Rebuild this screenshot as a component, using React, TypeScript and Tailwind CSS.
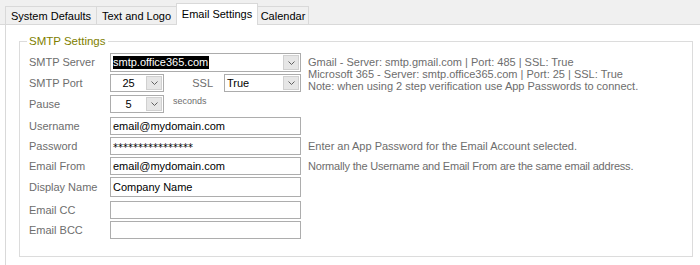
import React from "react";

const Chevron = () => (
  <svg width="7" height="4" viewBox="0 0 7 4">
    <path d="M0.5 0.5 L3.5 3.5 L6.5 0.5" fill="none" stroke="#606060" strokeWidth="1" />
  </svg>
);

function Combo({ className, children, center }: { className: string; children: React.ReactNode; center?: boolean }) {
  return (
    <div className={`flex border border-[#acacac] bg-white ${className}`}>
      <div className={`flex flex-1 items-center overflow-hidden text-black ${center ? "justify-center" : "pl-[2px]"}`}>{children}</div>
      <div className="my-px mr-px flex w-[16px] items-center justify-center border border-[#d0d0d0] bg-[#e6e6e6]">
        <Chevron />
      </div>
    </div>
  );
}

function TextBox({ className, children }: { className: string; children?: React.ReactNode }) {
  return (
    <div className={`flex w-[191px] items-center border border-[#adadad] bg-white pl-[2px] text-black ${className}`}>
      {children}
    </div>
  );
}

function Label({ children }: { children: React.ReactNode }) {
  return <div className="w-[81px] shrink-0 text-[#6d6d6d]">{children}</div>;
}

export default function App() {
  return (
    <div className="h-[265px] w-[700px] overflow-hidden bg-white text-[11px] leading-[13px] font-['Liberation_Sans',Tahoma,sans-serif]">
      {/* Tab strip */}
      <div className="flex h-[25px] items-end border-b border-[#d9d9d9] bg-[#f0f0f0] pl-[5px] text-[11px] leading-[14px] text-black">
        <div className="flex h-[18px] w-[92px] items-center justify-center border border-b-0 border-[#d9d9d9] bg-[#f0f0f0]">
          System Defaults
        </div>
        <div className="-ml-px flex h-[18px] w-[81px] items-center justify-center border border-b-0 border-[#d9d9d9] bg-[#f0f0f0]">
          Text and Logo
        </div>
        <div className="-mb-px -ml-px flex h-[22px] w-[82px] items-start justify-center border border-b-0 border-[#d9d9d9] bg-white pt-[3px]">
          Email Settings
        </div>
        <div className="-ml-px flex h-[18px] w-[52px] items-center justify-center border border-b-0 border-[#d9d9d9] bg-[#f0f0f0]">
          Calendar
        </div>
      </div>

      {/* Tab pane */}
      <div className="ml-[5px] h-[240px] border-l border-[#d9d9d9] pt-[16px]">
        <div className="relative ml-[13px] h-[216px] w-[674px] border border-[#dcdcdc] pl-[9px] pt-[11px]">
          <span className="absolute -top-[8px] left-[7px] bg-white px-[2px] text-[11.5px] leading-[14px] text-[#808000]">
            SMTP Settings
          </span>

          <div className="flex">
            <div className="w-[272px] shrink-0">
              <div className="flex h-[19px] items-center">
                <Label>SMTP Server</Label>
                <Combo className="h-[19px] w-[191px]">
                  <span className="bg-black pr-[1px] text-white">smtp.office365.com</span>
                </Combo>
              </div>
              <div className="mt-[2px] flex h-[18px] items-center">
                <Label>SMTP Port</Label>
                <Combo className="h-[18px] w-[54px]" center>
                  25
                </Combo>
                <div className="w-[49px] text-right text-[#6d6d6d]">SSL</div>
                <Combo className="ml-[11px] h-[18px] w-[77px]">True</Combo>
              </div>
              <div className="mt-[3px] flex h-[18px] items-start">
                <Label>
                  <div className="pt-[3px]">Pause</div>
                </Label>
                <Combo className="h-[18px] w-[54px]" center>
                  5
                </Combo>
                <div className="ml-[9px] pt-[1px] text-[9px] leading-[11px] text-[#6d6d6d]">seconds</div>
              </div>
            </div>
            <div className="ml-[7px] pt-[3px] leading-[12px] text-[#6d6d6d]">
              <div>Gmail - Server: smtp.gmail.com | Port: 485 | SSL: True</div>
              <div>Microsoft 365 - Server: smtp.office365.com | Port: 25 | SSL: True</div>
              <div>Note: when using 2 step verification use App Passwords to connect.</div>
            </div>
          </div>

          <div className="mt-[4px] flex h-[18px] items-center">
            <Label>Username</Label>
            <TextBox className="h-[18px]">email@mydomain.com</TextBox>
          </div>
          <div className="mt-[2px] flex h-[18px] items-center">
            <Label>Password</Label>
            <TextBox className="h-[18px]">
              <span className="pt-[3px] font-['DejaVu_Sans',sans-serif] text-[10px]">****************</span>
            </TextBox>
            <div className="ml-[7px] text-[#6d6d6d]">Enter an App Password for the Email Account selected.</div>
          </div>
          <div className="mt-[2px] flex h-[18px] items-center">
            <Label>Email From</Label>
            <TextBox className="h-[18px]">email@mydomain.com</TextBox>
            <div className="ml-[7px] tracking-[-0.2px] text-[#6d6d6d]">
              Normally the Username and Email From are the same email address.
            </div>
          </div>
          <div className="mt-[2px] flex h-[20px] items-center">
            <Label>Display Name</Label>
            <TextBox className="h-[20px]">Company Name</TextBox>
          </div>
          <div className="mt-[4px] flex h-[18px] items-center">
            <Label>Email CC</Label>
            <TextBox className="h-[18px]" />
          </div>
          <div className="mt-[2px] flex h-[18px] items-center">
            <Label>Email BCC</Label>
            <TextBox className="h-[18px]" />
          </div>
        </div>
      </div>
    </div>
  );
}
